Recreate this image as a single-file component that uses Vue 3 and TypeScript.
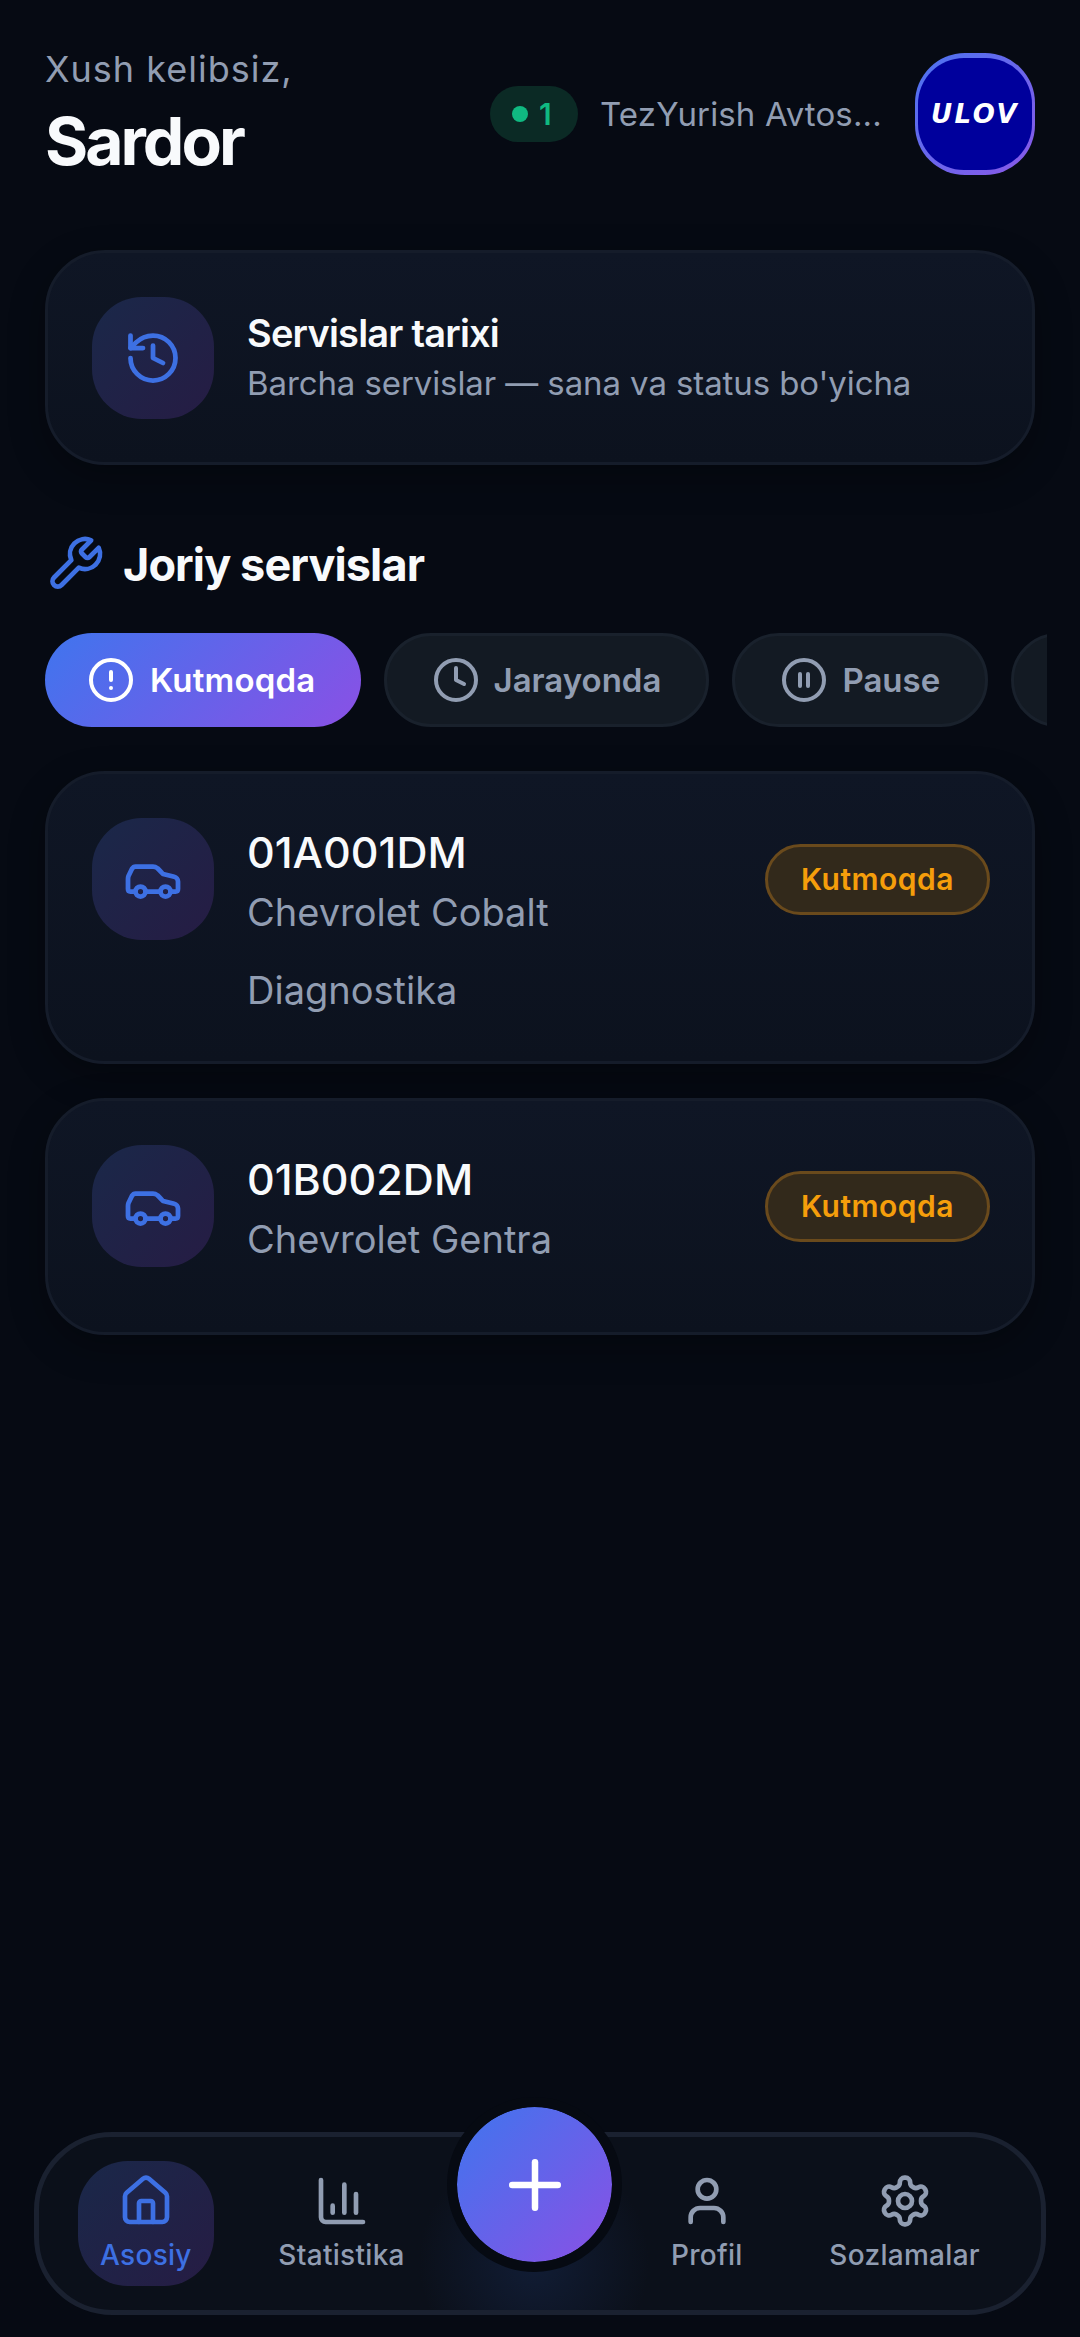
<script setup lang="ts">
interface Car {
  plate: string
  model: string
  note?: string
}

const cars: Car[] = [
  { plate: '01A001DM', model: 'Chevrolet Cobalt', note: 'Diagnostika' },
  { plate: '01B002DM', model: 'Chevrolet Gentra' }
]
</script>

<template>
  <div class="app">
    <header class="head">
      <div class="hello">
        <div class="hello-small">Xush kelibsiz,</div>
        <div class="hello-name">Sardor</div>
      </div>
      <div class="head-right">
        <div class="count"><span class="dot"></span>1</div>
        <div class="company">TezYurish Avtos...</div>
        <div class="logo"><div class="logo-in"><span>ULOV</span></div></div>
      </div>
    </header>

    <section class="card history">
      <div class="ico-box">
        <svg class="ico" viewBox="0 0 24 24"><path d="M3 12a9 9 0 1 0 9-9 9.75 9.75 0 0 0-6.74 2.74L3 8" /><path d="M3 3v5h5" /><path d="M12 7v5l4 2" /></svg>
      </div>
      <div>
        <div class="history-title">Servislar tarixi</div>
        <div class="history-sub">Barcha servislar — sana va status bo'yicha</div>
      </div>
    </section>

    <div class="section-head">
      <svg class="ico wrench" viewBox="0 0 24 24"><path d="M14.7 6.3a1 1 0 0 0 0 1.4l1.6 1.6a1 1 0 0 0 1.4 0l3.77-3.77a6 6 0 0 1-7.94 7.94l-6.91 6.91a2.12 2.12 0 0 1-3-3l6.91-6.91a6 6 0 0 1 7.94-7.94l-3.76 3.76z" /></svg>
      <h2>Joriy servislar</h2>
    </div>

    <div class="tabs">
      <div class="tab active">
        <svg class="tab-ico" viewBox="0 0 24 24"><circle cx="12" cy="12" r="10" /><path d="M12 8v4" /><path d="M12 16h.01" /></svg>
        Kutmoqda
      </div>
      <div class="tab">
        <svg class="tab-ico" viewBox="0 0 24 24"><circle cx="12" cy="12" r="10" /><path d="M12 6v6l4 2" /></svg>
        Jarayonda
      </div>
      <div class="tab">
        <svg class="tab-ico" viewBox="0 0 24 24"><circle cx="12" cy="12" r="10" /><path d="M10 15V9" /><path d="M14 15V9" /></svg>
        Pause
      </div>
      <!-- only the left edge of this tab is visible, the strip is scrolled -->
      <div class="tab tab-cut"></div>
    </div>

    <section v-for="car in cars" :key="car.plate" class="card car">
      <div class="ico-box">
        <svg class="ico" viewBox="0 0 24 24"><path d="M19 17h2c.6 0 1-.4 1-1v-3c0-.9-.7-1.7-1.5-1.9C18.7 10.6 16 10 16 10s-1.3-1.4-2.2-2.3c-.5-.4-1.1-.7-1.8-.7H5c-.6 0-1.1.4-1.4.9l-1.4 2.9A3.7 3.7 0 0 0 2 12v4c0 .6.4 1 1 1h2" /><circle cx="7" cy="17" r="2" /><path d="M9 17h6" /><circle cx="17" cy="17" r="2" /></svg>
      </div>
      <div class="car-text">
        <div class="plate">{{ car.plate }}</div>
        <div class="model">{{ car.model }}</div>
        <div v-if="car.note" class="note">{{ car.note }}</div>
      </div>
      <div class="status-wrap"><span class="status">Kutmoqda</span></div>
    </section>

    <div class="spacer"></div>

    <nav class="nav">
      <div class="nav-item on">
        <svg class="nav-ico" viewBox="0 0 24 24"><path d="M15 21v-8a1 1 0 0 0-1-1h-4a1 1 0 0 0-1 1v8" /><path d="M3 10a2 2 0 0 1 .709-1.528l7-5.999a2 2 0 0 1 2.582 0l7 5.999A2 2 0 0 1 21 10v9a2 2 0 0 1-2 2H5a2 2 0 0 1-2-2z" /></svg>
        <span>Asosiy</span>
      </div>
      <div class="nav-item">
        <svg class="nav-ico" viewBox="0 0 24 24"><path d="M3 3v16a2 2 0 0 0 2 2h16" /><path d="M8 17v-3" /><path d="M13 17V5" /><path d="M18 17V9" /></svg>
        <span>Statistika</span>
      </div>
      <div class="fab-slot">
        <button class="fab">
          <svg viewBox="0 0 24 24"><path d="M5 12h14" /><path d="M12 5v14" /></svg>
        </button>
      </div>
      <div class="nav-item">
        <svg class="nav-ico" viewBox="0 0 24 24"><path d="M19 21v-2a4 4 0 0 0-4-4H9a4 4 0 0 0-4 4v2" /><circle cx="12" cy="7" r="4" /></svg>
        <span>Profil</span>
      </div>
      <div class="nav-item">
        <svg class="nav-ico" viewBox="0 0 24 24"><path d="M12.22 2h-.44a2 2 0 0 0-2 2v.18a2 2 0 0 1-1 1.73l-.43.25a2 2 0 0 1-2 0l-.15-.08a2 2 0 0 0-2.73.73l-.22.38a2 2 0 0 0 .73 2.73l.15.1a2 2 0 0 1 1 1.72v.51a2 2 0 0 1-1 1.74l-.15.09a2 2 0 0 0-.73 2.73l.22.38a2 2 0 0 0 2.73.73l.15-.08a2 2 0 0 1 2 0l.43.25a2 2 0 0 1 1 1.73V20a2 2 0 0 0 2 2h.44a2 2 0 0 0 2-2v-.18a2 2 0 0 1 1-1.73l.43-.25a2 2 0 0 1 2 0l.15.08a2 2 0 0 0 2.73-.73l.22-.39a2 2 0 0 0-.73-2.73l-.15-.08a2 2 0 0 1-1-1.74v-.5a2 2 0 0 1 1-1.74l.15-.09a2 2 0 0 0 .73-2.73l-.22-.38a2 2 0 0 0-2.73-.73l-.15.08a2 2 0 0 1-2 0l-.43-.25a2 2 0 0 1-1-1.73V4a2 2 0 0 0-2-2z" /><circle cx="12" cy="12" r="3" /></svg>
        <span>Sozlamalar</span>
      </div>
    </nav>
  </div>
</template>

<style>
html,
body {
  margin: 0;
  background: #060a13;
}
</style>

<style scoped>
* {
  box-sizing: border-box;
}

.app {
  width: 1080px;
  height: 2337px;
  padding: 0 45px;
  display: flex;
  flex-direction: column;
  background: #060a13;
  color: #f8fafc;
  font-family: Inter, "Noto Sans", sans-serif;
  overflow: hidden;
}

svg {
  fill: none;
  stroke: currentColor;
  stroke-linecap: round;
  stroke-linejoin: round;
  stroke-width: 2;
  flex-shrink: 0;
}

.head {
  display: flex;
  justify-content: space-between;
  align-items: center;
  height: 122px;
  margin-top: 53px;
  margin-bottom: 75px;
  flex-shrink: 0;
}

.hello-small {
  font-size: 36px;
  line-height: 44px;
  letter-spacing: 1px;
  color: #919db2;
}

.hello-name {
  margin-top: 10px;
  font-size: 66px;
  line-height: 80px;
  font-weight: 700;
  letter-spacing: -3px;
}

.head-right {
  display: flex;
  align-items: center;
}

.count {
  display: flex;
  align-items: center;
  gap: 11px;
  height: 56px;
  width: 88px;
  padding-left: 22px;
  border-radius: 28px;
  background: #0b2a25;
  color: #10b981;
  font-size: 30px;
  font-weight: 600;
}

.dot {
  width: 16px;
  height: 16px;
  border-radius: 50%;
  background: #10b981;
}

.company {
  width: 280px;
  margin: 0 35px 0 22px;
  font-size: 33px;
  letter-spacing: 0.15px;
  color: #919db2;
  white-space: nowrap;
}

.logo {
  width: 120px;
  height: 122px;
  padding: 5px 3px;
  border-radius: 50px;
  background: linear-gradient(135deg, #4a74f0, #8a58e8);
}

.logo-in {
  width: 100%;
  height: 100%;
  display: flex;
  align-items: center;
  justify-content: center;
  border-radius: 46px;
  background: #00009c;
}

.logo-in span {
  font-family: "DejaVu Sans", sans-serif;
  font-size: 26px;
  font-weight: 700;
  font-style: italic;
  letter-spacing: 2.5px;
  color: #fff;
}

.card {
  display: flex;
  flex-shrink: 0;
  border: 3px solid #151c2a;
  border-radius: 60px;
  background: linear-gradient(180deg, #0f1625, #0c121e);
  box-shadow: 0 12px 36px rgba(0, 0, 0, 0.3);
  padding: 44px 42px 44px 44px;
}

.ico-box {
  width: 122px;
  height: 122px;
  flex-shrink: 0;
  margin-right: 33px;
  display: flex;
  align-items: center;
  justify-content: center;
  border-radius: 50px;
  background: linear-gradient(135deg, #1a2849, #261c44);
  color: #3d70e3;
}

.ico {
  width: 60px;
  height: 60px;
  stroke-width: 1.9;
}

.history {
  align-items: center;
  height: 215px;
}

.history-title {
  font-size: 38px;
  line-height: 46px;
  font-weight: 600;
  letter-spacing: -0.8px;
}

.history-sub {
  margin-top: 5px;
  font-size: 33px;
  line-height: 44px;
  letter-spacing: -0.1px;
  color: #919db2;
}

.section-head {
  display: flex;
  align-items: center;
  gap: 18px;
  margin-top: 69px;
  height: 60px;
  flex-shrink: 0;
}

.wrench {
  color: #3d70e3;
}

.section-head h2 {
  margin: 0;
  font-size: 45px;
  font-weight: 700;
  letter-spacing: -0.9px;
}

.tabs {
  display: flex;
  gap: 23px;
  width: 1002px;
  margin-top: 39px;
  margin-bottom: 44px;
  overflow: hidden;
  flex-shrink: 0;
}

.tab {
  display: flex;
  align-items: center;
  gap: 14px;
  height: 94px;
  padding: 0 45px;
  flex-shrink: 0;
  border: 3px solid #19212c;
  border-radius: 47px;
  background: #131a23;
  color: #919db2;
  font-size: 33px;
  font-weight: 600;
}

.tab.active {
  gap: 15px;
  border: none;
  padding: 0 45px 0 42px;
  background: linear-gradient(135deg, #3f75ee, #8a50e5);
  color: #fff;
  letter-spacing: 0.2px;
}

.tab-cut {
  width: 240px;
}

.tab-ico {
  width: 48px;
  height: 48px;
}

.car {
  margin-bottom: 34px;
}

.car-text {
  flex: 1;
  padding: 7px 0 3px;
}

.plate {
  font-size: 43px;
  line-height: 54px;
  font-weight: 500;
}

.model {
  margin-top: 9px;
  margin-bottom: 22px;
  font-size: 38px;
  line-height: 48px;
  color: #919db2;
}

.note {
  margin-top: 30px;
  font-size: 38px;
  line-height: 48px;
  color: #919db2;
}

.status-wrap {
  display: flex;
  align-items: center;
  height: 122px;
}

.status {
  display: flex;
  align-items: center;
  height: 71px;
  padding: 0 33px;
  border: 3px solid #6a4a1c;
  border-radius: 36px;
  background: #32291b;
  color: #f59e0b;
  font-size: 30px;
  font-weight: 600;
  letter-spacing: 0.5px;
}

.spacer {
  flex: 1;
}

.nav {
  display: flex;
  justify-content: space-between;
  align-items: flex-start;
  width: 1012px;
  height: 183px;
  margin: 0 -11px 22px;
  padding: 24px 39px 0;
  border: 5px solid #1a2130;
  border-radius: 78px;
  background: radial-gradient(circle at 495px 125px, rgba(30, 55, 110, 0.32), transparent 115px), #0b101a;
  flex-shrink: 0;
}

.nav-item {
  display: flex;
  flex-direction: column;
  align-items: center;
  height: 125px;
  padding: 12px 22px 0;
  border-radius: 50px;
  color: #919db2;
}

.nav-item span {
  margin-top: 8px;
  font-size: 28px;
  line-height: 36px;
  font-weight: 500;
  letter-spacing: 0.3px;
}

.nav-item.on {
  background: linear-gradient(135deg, #1a2849, #261c44);
  color: #3d70e3;
}

.nav-ico {
  width: 56px;
  height: 56px;
}

.fab-slot {
  position: relative;
  width: 137px;
}

.fab {
  position: absolute;
  left: -22px;
  top: -64px;
  width: 175px;
  height: 175px;
  padding: 0;
  display: flex;
  align-items: center;
  justify-content: center;
  border: 10px solid #060a12;
  border-radius: 50%;
  background: linear-gradient(135deg, #3f75ee, #8a50e5) padding-box;
  color: #fff;
}

.fab svg {
  width: 78px;
  height: 78px;
}
</style>
